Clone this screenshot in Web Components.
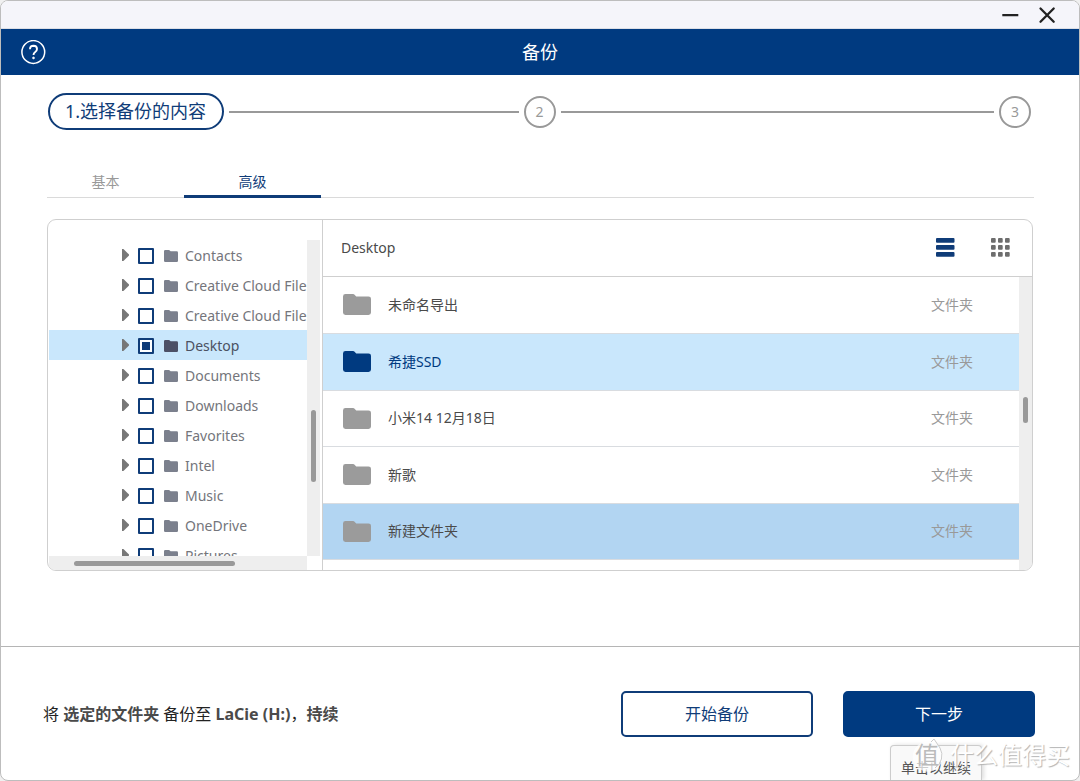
<!DOCTYPE html>
<html lang="zh-CN">
<head>
<meta charset="utf-8">
<meta name="viewport" content="width=device-width, initial-scale=1">
<title>备份</title>
<style>
  body {
    margin: 0;
    background: #f0f0f0;
    color: #4a4a4a;
    font: 14px/20px "Noto Sans", "Noto Sans CJK SC", sans-serif;
    --navy: #003a80;
    --ink: #0f3c78;
    --line: #cfcfcf;
    --sky: #c9e7fc;
  }
</style>
</head>
<body>
<app-window>
  <app-header slot="header">备份</app-header>
  <step-bar></step-bar>
  <tab-bar></tab-bar>
  <split-panel>
    <folder-tree slot="tree"></folder-tree>
    <file-list slot="list"></file-list>
  </split-panel>
  <backup-footer slot="footer"></backup-footer>
</app-window>

<script>
const define = (name, markup, setup) => {
  const template = document.createElement('template');
  template.innerHTML = `<style>*{box-sizing:border-box}button{font:inherit;cursor:pointer}[hidden]{display:none}</style>${markup}`;
  customElements.define(name, class extends HTMLElement {
    constructor() {
      super();
      this.attachShadow({ mode: 'open' }).append(template.content.cloneNode(true));
      if (setup) setup(this.shadowRoot, this);
    }
  });
};

define('folder-icon', `
  <style>
    :host { display: block; width: 14px; height: 12px; color: #7b808d; }
    svg { display: block; width: 100%; height: 100%; }
  </style>
  <svg viewBox="0 0 28 22" preserveAspectRatio="none" fill="currentColor" aria-hidden="true">
    <path d="M2.500 0H10q1 0 1.600.7L13.200 2.500H25.500q2.500 0 2.500 2.500V19.500q0 2.500-2.500 2.500H2.500Q0 22 0 19.500V2.500Q0 0 2.500 0Z"/>
  </svg>`);

define('app-window', `
  <style>
    :host { display: block; }
    .frame { position: relative; display: flex; flex-direction: column; box-sizing: border-box; min-height: 100vh; overflow: hidden; background: #fff; border: 1px solid #bdbdbd; border-radius: 8px; }
    .title { display: flex; justify-content: flex-end; align-items: center; gap: 16px; height: 28px; padding: 0 22px; background: #f5f5fa; border-bottom: 1px solid #dcdfe6; }
    .title button { display: block; padding: 0; border: 0; background: none; height: 20px; }
    svg { display: block; }
    main { flex: 1; padding: 18px 45px 74px 46px; }
  </style>
  <div class="frame">
    <div class="title">
      <button type="button" aria-label="最小化"><svg width="20" height="20" viewBox="0 0 20 20"><path d="M1.300 10.200H17.300" stroke="#222" stroke-width="2.200"/></svg></button>
      <button type="button" aria-label="关闭"><svg width="20" height="20" viewBox="0 0 20 20"><path d="M3.500 3.500L16.700 16.700M16.700 3.500L3.500 16.700" stroke="#222" stroke-width="2.300" stroke-linecap="round"/></svg></button>
    </div>
    <slot name="header"></slot>
    <main><slot></slot></main>
    <slot name="footer"></slot>
  </div>`);

define('app-header', `
  <style>
    :host { display: grid; grid-template-columns: 1fr auto 1fr; align-items: center; height: 46px; padding: 0 20px; box-sizing: border-box; background: var(--navy); color: #fff; }
    h1 { margin: 0; font-size: 18px; line-height: 24px; font-weight: 400; }
    button { justify-self: start; width: 25px; height: 25px; padding: 0; border: 0; background: none; }
    svg { display: block; }
  </style>
  <button type="button" aria-label="帮助"><svg width="25" height="25" viewBox="0 0 25 25" fill="none" stroke="#fff"><circle cx="12.300" cy="12" r="11.400" stroke-width="1.500"/><path d="M9 9.200Q9 5.800 12.500 5.800Q16 5.900 16 9Q16 10.700 14.200 12Q12.500 13.100 12.500 15" stroke-width="1.900"/><circle cx="12.500" cy="17.900" r="1" fill="#fff" stroke-width=".6"/></svg></button>
  <h1><slot></slot></h1>`);

define('step-bar', `
  <style>
    :host { display: block; padding: 0 3px 0 1px; }
    ol { display: grid; grid-template-columns: 1fr auto 1fr; align-items: center; gap: 5px; margin: 0; padding: 0; list-style: none; color: #999; }
    li { display: flex; align-items: center; gap: 5px; }
    li.first::after, li.last::before { content: ""; flex: 1; height: 2px; background: #999; }
    .pill { box-sizing: border-box; padding: 5px 16px 5px 15px; border: 2px solid var(--ink); border-radius: 19px; color: var(--ink); font-size: 18px; line-height: 23px; }
    .dot { width: 32px; height: 32px; border: 2px solid #999; border-radius: 50%; text-align: center; line-height: 28px; }
  </style>
  <ol>
    <li class="first" aria-current="step"><span class="pill">1.选择备份的内容</span></li>
    <li><span class="dot">2</span></li>
    <li class="last"><span class="dot">3</span></li>
  </ol>`);

define('tab-bar', `
  <style>
    :host { display: block; margin-top: 36px; }
    [role=tablist] { display: flex; border-bottom: 1px solid #dadada; }
    button { width: 137px; height: 32px; padding: 3px 0 0; border: 0; border-bottom: 3px solid transparent; margin-bottom: -1px; background: none; color: #999; line-height: 20px; }
    button:first-child { padding-right: 20px; }
    button[aria-selected=true] { color: var(--ink); border-color: var(--ink); }
  </style>
  <div role="tablist">
    <button type="button" role="tab" aria-selected="false">基本</button>
    <button type="button" role="tab" aria-selected="true">高级</button>
  </div>`);

define('split-panel', `
  <style>
    :host { display: grid; grid-template-columns: 275px 1fr; margin: 21px 1px 0 0; border: 1px solid var(--line); border-radius: 9px; overflow: hidden; }
    .side { border-right: 1px solid var(--line); min-width: 0; }
    .body { display: grid; min-width: 0; }
  </style>
  <div class="side"><slot name="tree"></slot></div>
  <div class="body"><slot name="list"></slot></div>`);

define('folder-tree', `
  <style>
    :host { display: grid; grid-template-columns: 1fr 13px; grid-template-rows: 316px 14px; padding: 20px 2px 0 1px; }
    ul { margin: 0; padding: 0; list-style: none; overflow: hidden; }
    li { display: flex; align-items: center; height: 30px; padding-left: 73px; color: #74757b; white-space: nowrap; }
    li.on { background: var(--sky); color: #4b5162; }
    .twist { flex: none; width: 7px; height: 12px; margin-right: 9px; padding: 0; border: 0; background: #777; clip-path: polygon(0 0, 20% 0, 100% 45%, 100% 55%, 20% 100%, 0 100%); }
    label { flex: none; display: flex; align-items: center; padding-top: 1px; }
    input { flex: none; appearance: none; width: 16px; height: 16px; margin: 0 10px 0 0; border: 2px solid var(--ink); border-radius: 1px; background: #fff; }
    input:indeterminate { background: linear-gradient(var(--ink), var(--ink)) center / 8px 8px no-repeat #fff; }
    folder-icon { margin-right: 7px; }
    .on folder-icon { color: #4c5066; }
    .v, .h { background: #eee; }
    .v { padding: 170px 4px 0; }
    .v i { display: block; width: 5px; height: 72px; border-radius: 3px; background: #999; }
    .h { padding: 5px 0 0 25px; }
    .h i { display: block; width: 161px; height: 5px; border-radius: 3px; background: #999; }
  </style>
  <ul></ul>
  <div class="v"><i></i></div>
  <div class="h"><i></i></div>`,
  root => {
    const names = ['Contacts', 'Creative Cloud Files', 'Creative Cloud Files', 'Desktop', 'Documents', 'Downloads', 'Favorites', 'Intel', 'Music', 'OneDrive', 'Pictures'];
    root.querySelector('ul').innerHTML = names.map(n => `<li class="${n === 'Desktop' ? 'on' : ''}"><button class="twist" type="button" aria-label="展开 ${n}"></button><label><input type="checkbox"><folder-icon></folder-icon>${n}</label></li>`).join('');
    root.querySelector('.on input').indeterminate = true;
  });

define('file-list', `
  <style>
    :host { display: grid; grid-template-columns: 1fr 13px; grid-template-rows: 57px 1fr; }
    header { grid-column: 1 / -1; display: flex; align-items: center; padding: 0 22px 0 18px; border-bottom: 1px solid var(--line); }
    h2 { flex: 1; margin: 0; font-size: 14px; font-weight: 400; line-height: 20px; }
    header button { width: 20px; height: 20px; margin-left: 35px; padding: 0; border: 0; background: none; }
    svg { display: block; }
    table { width: 100%; border-collapse: collapse; align-self: start; }
    td { height: 56px; padding: 0; border-bottom: 1px solid #d9dce0; }
    tr:nth-child(even) td { height: 57px; }
    td:first-child { width: 65px; padding-left: 20px; }
    td:last-child { width: 88px; color: #999; }
    folder-icon { width: 28px; height: 21px; color: #9b9b9b; }
    .picked { background: var(--sky); }
    .picked td:nth-child(2) { color: var(--navy); }
    .picked folder-icon { color: var(--navy); }
    .hover { background: #b2d5f2; }
    .v { padding: 120px 4px 0; background: #eee; }
    .v i { display: block; width: 5px; height: 26px; border-radius: 3px; background: #999; }
  </style>
  <header>
    <h2>Desktop</h2>
    <button type="button" aria-label="列表视图"><svg width="20" height="20" fill="#0f3c78"><rect x="1" y="0" width="18.500" height="4.700" rx="1"/><rect x="1" y="7" width="18.500" height="4.700" rx="1"/><rect x="1" y="14" width="18.500" height="4.700" rx="1"/></svg></button>
    <button type="button" aria-label="网格视图"><svg width="20" height="20" fill="#6e6e6e"></svg></button>
  </header>
  <table><tbody></tbody></table>
  <div class="v"><i></i></div>`,
  root => {
    const rows = [['未命名导出', ''], ['希捷SSD', 'picked'], ['小米14 12月18日', ''], ['新歌', ''], ['新建文件夹', 'hover']];
    root.querySelector('tbody').innerHTML = rows.map(([n, c]) => `<tr class="${c}"><td><folder-icon></folder-icon></td><td>${n}</td><td>文件夹</td></tr>`).join('');
    root.querySelectorAll('svg')[1].innerHTML = [0, 7, 14].flatMap(y => [1, 8, 15].map(x => `<rect x="${x}" y="${y}" width="4.700" height="4.700" rx="1"/>`)).join('');
  });

define('action-button', `
  <style>
    :host { display: block; width: 192px; }
    button { display: block; width: 100%; height: 46px; padding: 0; border: 2px solid var(--ink); border-radius: 5px; background: #fff; color: var(--ink); font-size: 16px; line-height: 24px; }
    :host([primary]) button { background: var(--navy); border-color: var(--navy); color: #fff; }
  </style>
  <button type="button"><slot></slot></button>`);

define('site-mark', `
  <style>
    :host { display: flex; align-items: center; gap: 5px; color: #fff; font-size: 24px; line-height: 32px; white-space: nowrap; text-shadow: 1px 1px 1px #b4b4b4; }
    .logo { position: relative; width: 36px; height: 34px; text-align: center; line-height: 34px; }
    svg { position: absolute; inset: 0; }
    b { position: relative; font-weight: 400; color: #bbb; text-shadow: none; }
  </style>
  <span class="logo"><svg width="36" height="36" viewBox="0 0 36 36" aria-hidden="true"><path d="M22 4A15 15 0 1 0 31 10L25 1Z" fill="#fff" fill-opacity=".7"/><path d="M22 4L25 1L31 10A15 15 0 0 1 26 30" fill="none" stroke="#ccc"/></svg><b>值</b></span><span>什么值得买</span>`);

define('backup-footer', `
  <style>
    :host { position: relative; display: flex; align-items: center; gap: 30px; padding: 44px 44px 43px 42px; border-top: 1px solid #b5b5b5; }
    p { flex: 1; margin: 0; color: #222; font-size: 16px; line-height: 24px; }
    b { color: #4a4a4a; }
    .tip { position: absolute; right: 97px; bottom: 0; box-sizing: border-box; height: 35px; padding: 12px 10px 0; overflow: hidden; border: 1px solid #ccc; border-bottom: 0; border-radius: 4px 4px 0 0; background: #f9f9f9; box-shadow: 2px 0 4px #ddd; color: #555; }
    site-mark { position: absolute; right: 9px; bottom: 8px; }
  </style>
  <p>将 <b>选定的文件夹</b> 备份至 <b>LaCie (H:)</b>，<b>持续</b></p>
  <action-button>开始备份</action-button>
  <action-button primary>下一步</action-button>
  <span class="tip" role="tooltip">单击以继续</span>
  <site-mark></site-mark>`);
</script>
</body>
</html>
